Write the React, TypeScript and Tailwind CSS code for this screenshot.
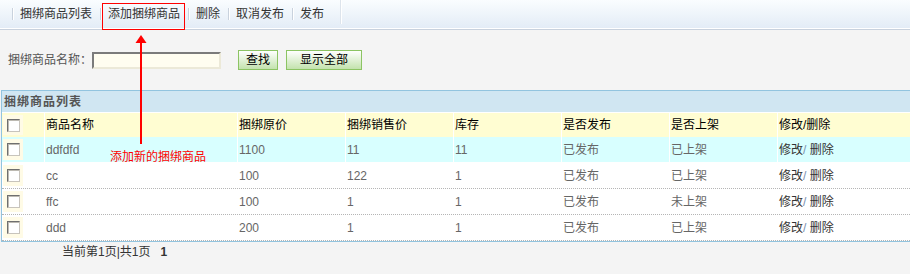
import React from "react";

const font = { fontFamily: '"Liberation Sans", "Noto Sans CJK SC", sans-serif' };

const menu = ["捆绑商品列表", "添加捆绑商品", "删除", "取消发布", "发布"];

const rows = [
  { name: "ddfdfd", price: "1100", sale: "11", stock: "11", pub: "已发布", shelf: "已上架" },
  { name: "cc", price: "100", sale: "122", stock: "1", pub: "已发布", shelf: "已上架" },
  { name: "ffc", price: "100", sale: "1", stock: "1", pub: "已发布", shelf: "未上架" },
  { name: "ddd", price: "200", sale: "1", stock: "1", pub: "已发布", shelf: "已上架" },
];

const Sep = () => (
  <div className="flex h-[12px]">
    <div className="w-px bg-[#c9d2dd]" />
    <div className="w-px bg-white" />
  </div>
);

const CheckCell = () => (
  <div className="h-full pl-px py-[2px]">
    <div className="flex h-full w-[20px] items-center justify-center bg-[#fffbe6]">
      <span className="block h-[13px] w-[13px] border border-t-[#6f6f6f] border-l-[#6f6f6f] border-b-[#c8c4bc] border-r-[#c8c4bc] bg-white shadow-[inset_1px_1px_0_#bdbab2]" />
    </div>
  </div>
);

const cols = "grid grid-cols-[42px_193px_108px_108px_108px_108px_108px_1fr]";

export default function App() {
  return (
    <div className="relative h-[274px] w-[910px] overflow-hidden bg-[#f4f4f4] text-[12px]" style={font}>
      {/* toolbar */}
      <div className="flex h-[28px] items-center bg-linear-to-b from-[#fafdff] to-[#e3ecf6] pl-[12px] text-[#333]">
        {menu.map((m) => (
          <div key={m} className="flex items-center">
            <Sep />
            <span className="pl-[6px] pr-[8px] leading-[16px]">{m}</span>
          </div>
        ))}
        <div className="ml-[8px] flex h-[24px] self-start">
          <div className="w-px bg-[#dde4ec]" />
          <div className="w-px bg-white" />
        </div>
      </div>
      <div className="h-px bg-white" />
      <div className="h-px bg-[#c8d1dd]" />

      {/* search */}
      <div className="h-[60px] pt-[20px]">
        <div className="flex h-[20px] items-center pl-[8px]">
          <span className="text-[#555]">捆绑商品名称：</span>
          <input
            className="h-[17px] w-[129px] border-2 border-t-[#7b7b7b] border-l-[#7b7b7b] border-b-[#ece9d8] border-r-[#ece9d8] bg-[#fffdf0] outline-none"
            style={font}
          />
          <button className="ml-[17px] flex h-[20px] w-[40px] items-center justify-center border border-[#8cc463] bg-linear-to-b from-white to-[#c3e2ad] text-black">
            查找
          </button>
          <button className="ml-[8px] flex h-[20px] w-[76px] items-center justify-center border border-[#8cc463] bg-linear-to-b from-white to-[#c3e2ad] text-black">
            显示全部
          </button>
        </div>
      </div>

      {/* table */}
      <div className="ml-px border-t border-b border-l border-[#92c4df]">
        <div className="flex h-[22px] items-center border-b border-white bg-[#d0e6f2] pl-[2px] font-bold tracking-[1px] text-[#555]">
          捆绑商品列表
        </div>
        <div className={`${cols} h-[24px] bg-[#fffdd2] text-black`}>
          <CheckCell />
          {["商品名称", "捆绑原价", "捆绑销售价", "库存", "是否发布", "是否上架", "修改/删除"].map((h) => (
            <div key={h} className="flex items-center border-l border-white pl-px">
              {h}
            </div>
          ))}
        </div>
        {rows.map((r, i) => (
          <div
            key={r.name}
            className={`${cols} h-[26px] border-b ${
              i === 0 ? "border-white bg-[#d8ffff]" : "border-dotted border-[#b5b5b5] bg-white"
            } text-[#666]`}
          >
            <CheckCell />
            {[r.name, r.price, r.sale, r.stock, r.pub, r.shelf].map((v, j) => (
              <div key={j} className={`flex items-center border-l pl-px ${i === 0 ? "border-white" : "border-transparent"}`}>
                {v}
              </div>
            ))}
            <div className={`flex items-center border-l pl-px text-[#333] ${i === 0 ? "border-white" : "border-transparent"}`}>
              修改<span className="text-[#7a8fb0]">/</span>&nbsp;删除
            </div>
          </div>
        ))}
      </div>

      {/* pager */}
      <div className="pl-[62px] pt-[2px] leading-[16px] text-[#333]">
        当前第1页|共1页&nbsp;&nbsp;&nbsp;<span className="font-bold">1</span>
      </div>

      {/* annotation */}
      <div className="absolute left-[102px] top-[3px] h-[27px] w-[83px] border border-[#f00]" />
      <svg className="absolute left-[134px] top-[34px]" width="14" height="112" viewBox="0 0 14 112">
        <polygon points="7,1 1.5,9 12.5,9" fill="#f00" />
        <rect x="6" y="9" width="2" height="101" fill="#f00" />
      </svg>
      <span className="absolute left-[110px] top-[149px] leading-[16px] text-[#f00]">添加新的捆绑商品</span>
    </div>
  );
}
